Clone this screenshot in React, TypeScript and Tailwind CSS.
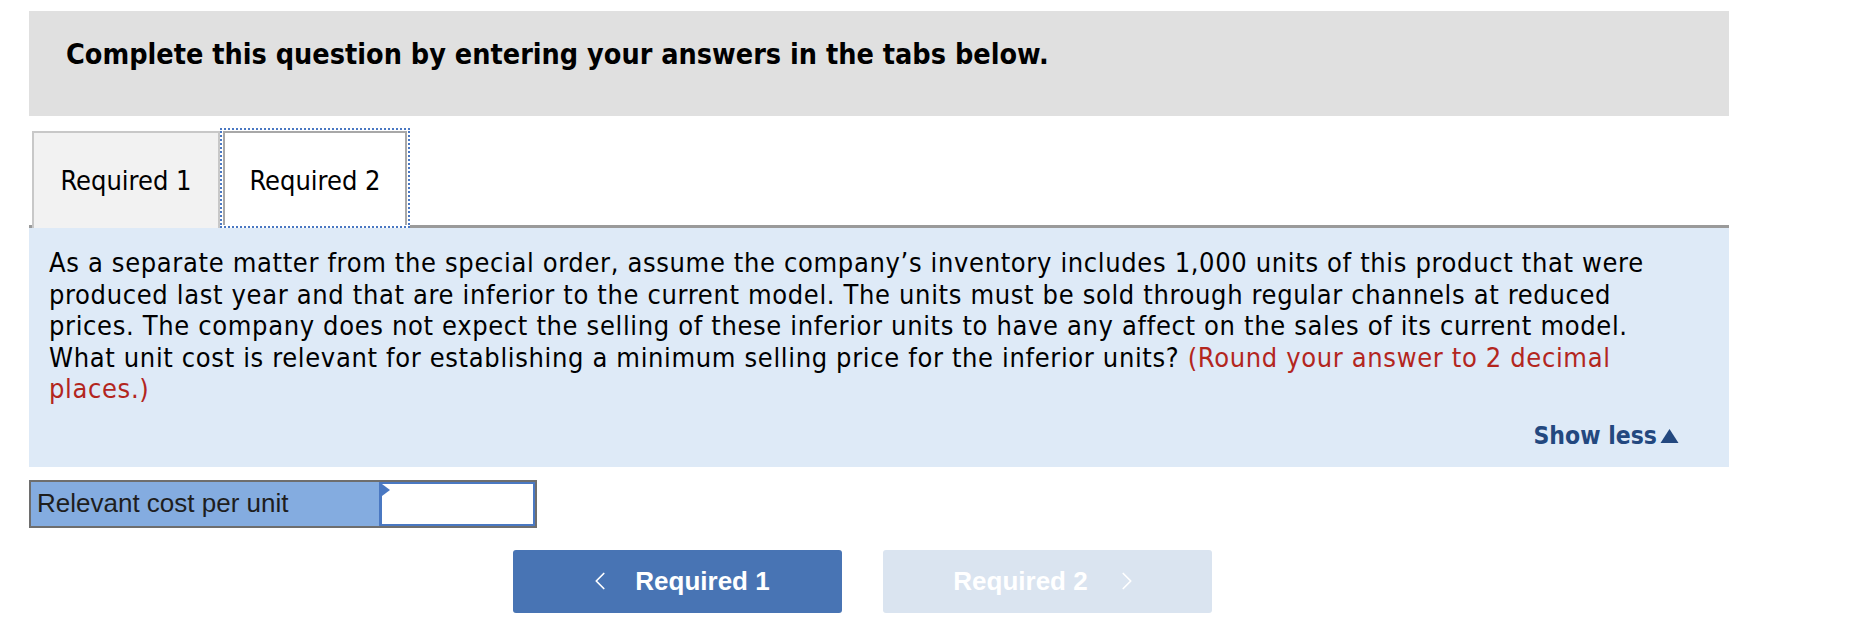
import { ChevronLeft, ChevronRight } from "lucide-react";

const tahoma = { fontFamily: "'DejaVu Sans Condensed', 'DejaVu Sans', sans-serif", fontStretch: "condensed" };
const arial = { fontFamily: "'Liberation Sans', Arial, sans-serif" };

export default function App() {
  return (
    <div className="min-h-[626px] w-[1874px] bg-white pl-[29px] pt-[11px]">
      <div className="w-[1700px]">
        {/* 상단 안내 박스 */}
        <div className="h-[105px] bg-[#e0e0e0] pl-[37px] pt-[28px]">
          <h1 className="text-[28.5px] leading-[32px] font-bold text-black" style={tahoma}>
            Complete this question by entering your answers in the tabs below.
          </h1>
        </div>

        {/* 탭 영역 */}
        <div className="mt-[12px] flex items-end border-b-[3px] border-[#9a9a9a] pl-[3px]">
          <button
            className="-mb-[3px] h-[97px] w-[188px] border-x-2 border-t-2 border-[#c8c8c8] bg-[#f2f2f2] pt-[2px] text-[27px] text-black"
            style={tahoma}
          >
            Required 1
          </button>
          <div className="-mb-[3px] h-[100px] w-[190px] border-2 border-dotted border-[#4a78c2] bg-white p-px">
            <div className="flex h-full items-center justify-center border-x-2 border-t-2 border-[#a8a8a8] pt-[4px] text-[27px] text-black" style={tahoma}>
              Required 2
            </div>
          </div>
        </div>

        {/* 문제 본문 */}
        <div className="bg-[#deeaf7] pb-[17px] pl-[20px] pr-[50px] pt-[19px]">
          <p className="pr-[20px] text-[27px] leading-[31.5px] tracking-[0.65px] text-black" style={tahoma}>
            As a separate matter from the special order, assume the company’s inventory includes 1,000 units of this product that were produced last year and that are inferior to the current model. The units must be sold through regular channels at reduced prices. The company does not expect the selling of these inferior units to have any affect on the sales of its current model. What unit cost is relevant for establishing a minimum selling price for the inferior units?{" "}
            <span className="text-[#b3261e]">(Round your answer to 2 decimal places.)</span>
          </p>
          <div className="mt-[17px] flex justify-end">
            <span className="flex items-center text-[24.5px] leading-[28px] font-bold text-[#23487f]" style={tahoma}>
              Show less
              <svg width="19" height="16" viewBox="0 0 19 16" className="ml-[3px]">
                <polygon points="9.5,1 18.5,15 0.5,15" fill="#23487f" />
              </svg>
            </span>
          </div>
        </div>

        {/* 답 입력 행 */}
        <div className="mt-[13px] flex h-[48px] w-[508px] border-2 border-[#6e6e6e]">
          <div className="flex w-[348px] items-center bg-[#84ace0] pl-[6px] text-[26px] text-[#1e1e1e]" style={arial}>
            Relevant cost per unit
          </div>
          <div className="relative flex-1 border-2 border-l-[3px] border-[#4a78c2] bg-white">
            <svg width="8" height="12" viewBox="0 0 8 12" className="absolute left-0 top-0">
              <polygon points="0,0 8,6 0,12" fill="#4a78c2" />
            </svg>
            <input className="h-full w-full bg-transparent px-2 text-[22px] outline-none" style={arial} />
          </div>
        </div>

        {/* 하단 이동 버튼 */}
        <div className="mt-[22px] flex gap-[41px] pl-[484px]">
          <button className="flex h-[63px] w-[329px] items-center justify-center gap-[20px] rounded-[3px] bg-[#4874b4] text-[26px] font-bold text-white" style={arial}>
            <ChevronLeft size={30} strokeWidth={1.4} />
            <span>Required 1</span>
          </button>
          <button className="flex h-[63px] w-[329px] items-center justify-center gap-[24px] rounded-[3px] bg-[#dae4f0] text-[26px] font-bold text-white" style={arial}>
            <span>Required 2</span>
            <ChevronRight size={30} strokeWidth={1.4} />
          </button>
        </div>
      </div>
    </div>
  );
}
